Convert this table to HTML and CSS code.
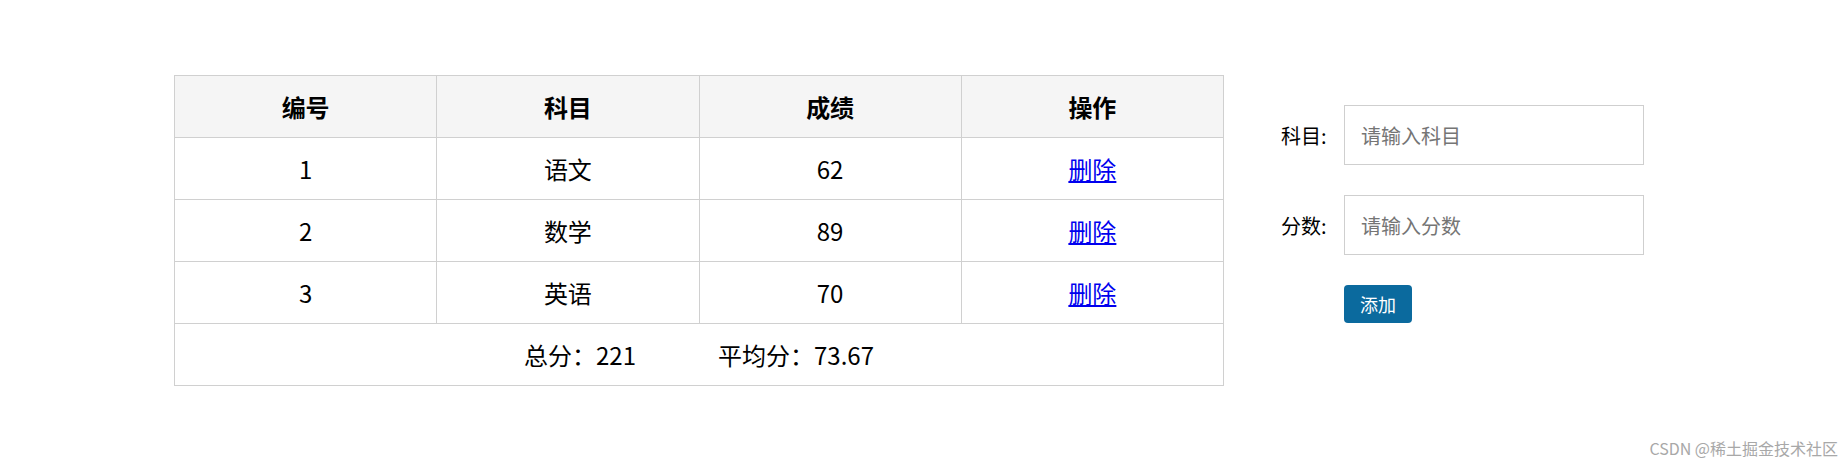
FILE: index.html
```html
<!DOCTYPE html>
<html lang="zh-CN">
<head>
<meta charset="utf-8">
<title>成绩管理</title>
<link rel="stylesheet" href="styles.css">
</head>
<body>
<div class="page">
  <table class="score-table">
    <thead>
      <tr><th>编号</th><th>科目</th><th>成绩</th><th>操作</th></tr>
    </thead>
    <tbody>
      <tr><td>1</td><td>语文</td><td>62</td><td><a href="#">删除</a></td></tr>
      <tr><td>2</td><td>数学</td><td>89</td><td><a href="#">删除</a></td></tr>
      <tr><td>3</td><td>英语</td><td>70</td><td><a href="#">删除</a></td></tr>
    </tbody>
    <tfoot>
      <tr><td colspan="4"><span class="stat">总分：221</span><span class="stat">平均分：73.67</span></td></tr>
    </tfoot>
  </table>
  <div class="form">
    <div class="form-row">
      <label class="form-label">科目:</label>
      <input class="form-input" type="text" placeholder="请输入科目">
    </div>
    <div class="form-row">
      <label class="form-label">分数:</label>
      <input class="form-input" type="text" placeholder="请输入分数">
    </div>
    <div class="form-row">
      <span class="form-label"></span>
      <button class="add-btn">添加</button>
    </div>
  </div>
</div>
<div class="watermark">CSDN @稀土掘金技术社区</div>
</body>
</html>
```
FILE: styles.css
```css
html, body {
  margin: 0;
  padding: 0;
  background: #ffffff;
}
body {
  width: 1848px;
  height: 466px;
  position: relative;
  overflow: hidden;
  font-family: "Noto Sans CJK SC", "Noto Sans", sans-serif;
  color: #000;
}
.page {
  display: flex;
  align-items: flex-start;
  padding: 75px 0 0 174px;
}
.score-table {
  width: 1050px;
  border-collapse: collapse;
  table-layout: fixed;
  font-size: 24px;
}
.score-table th,
.score-table td {
  border: 1px solid #d0d0d0;
  height: 61px;
  padding: 0;
  text-align: center;
  vertical-align: middle;
  font-weight: normal;
}
.score-table th {
  background: #f5f5f5;
  font-weight: bold;
}
.score-table a {
  color: #0000ee;
  text-decoration: underline;
}
.stat {
  margin: 0 41px;
}
.form {
  margin-left: 57px;
  margin-top: 30px;
  display: flex;
  flex-direction: column;
  gap: 30px;
}
.form-row {
  display: flex;
  align-items: center;
}
.form-label {
  width: 50px;
  margin-right: 13px;
  font-size: 20px;
  white-space: nowrap;
}
.form-input {
  width: 300px;
  height: 60px;
  box-sizing: border-box;
  border: 1px solid #cfcfcf;
  padding: 0 16px;
  font-family: inherit;
  font-size: 20px;
  outline: none;
}
.form-input::placeholder {
  color: #757575;
}
.add-btn {
  width: 68px;
  height: 38px;
  border: none;
  border-radius: 4px;
  background: #0b6a9e;
  color: #fff;
  font-family: inherit;
  font-size: 18px;
  padding: 0;
}
.watermark {
  position: absolute;
  right: 10px;
  bottom: 8px;
  font-size: 16px;
  line-height: 20px;
  color: #a8a8a8;
  white-space: nowrap;
}
```
